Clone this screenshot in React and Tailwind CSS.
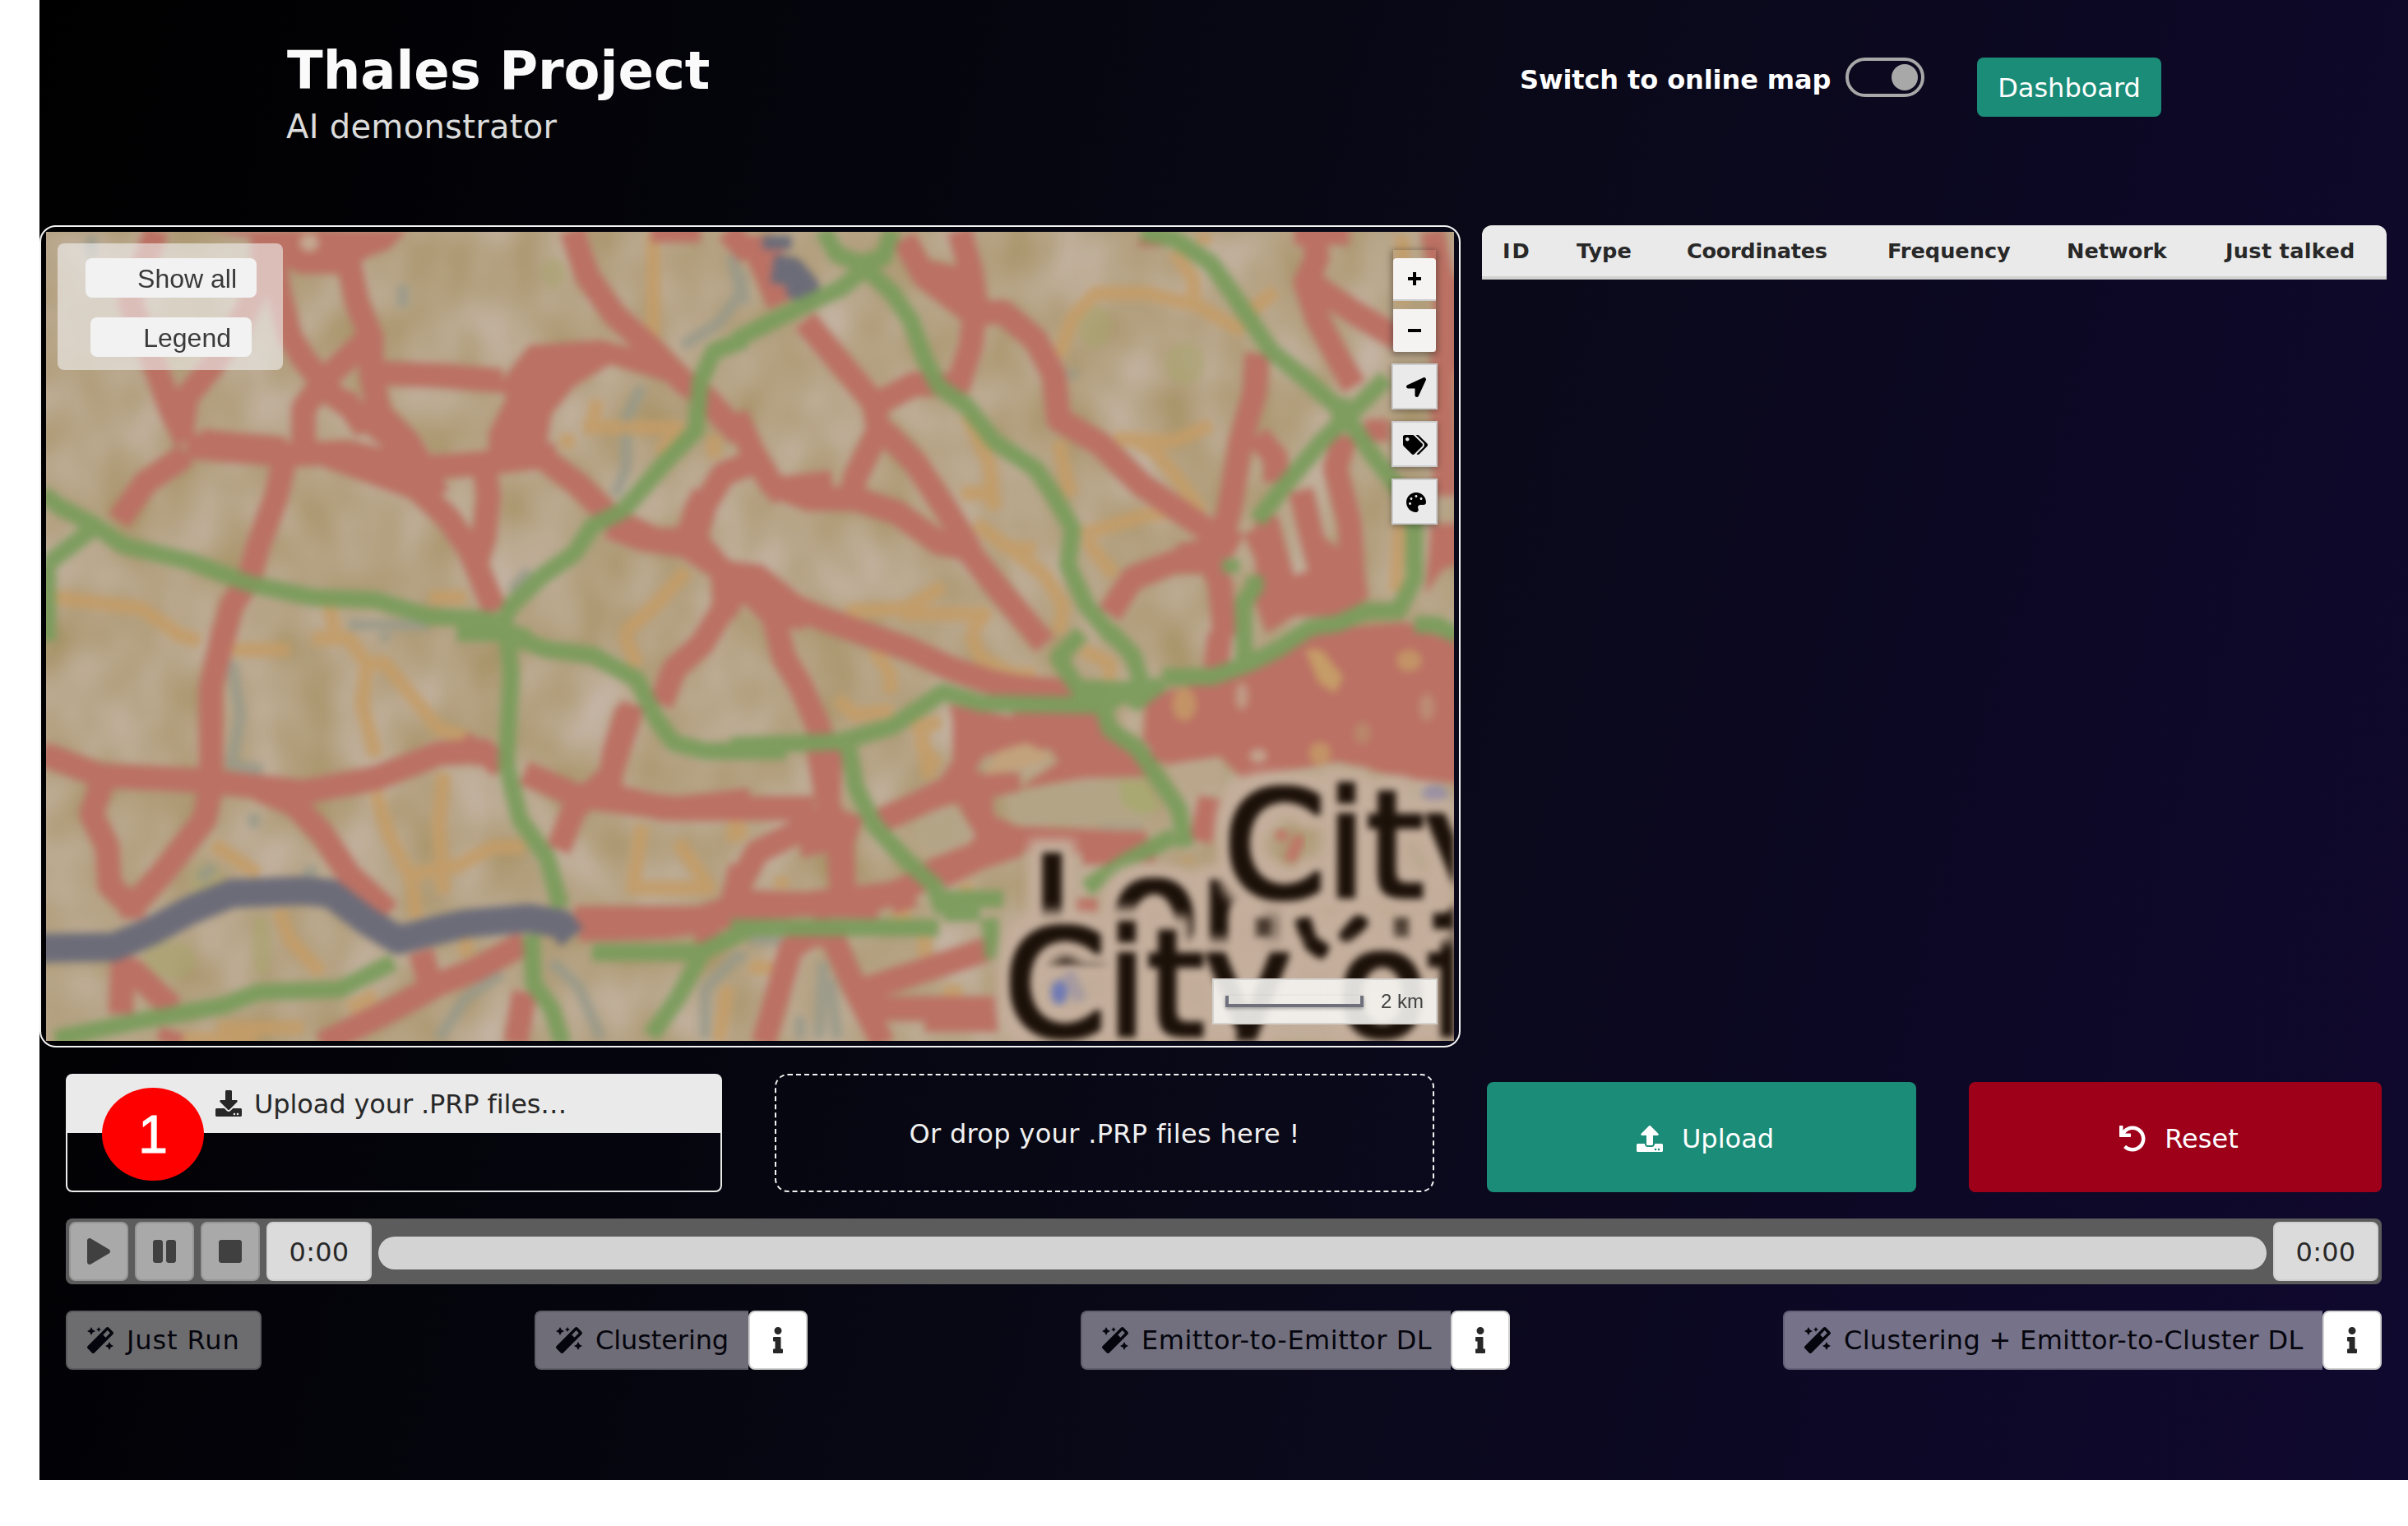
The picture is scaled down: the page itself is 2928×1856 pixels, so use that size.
import React from "react";
import {
  FaDownload, FaInfo, FaLocationArrow, FaMagic, FaPalette, FaPause, FaPlay,
  FaStop, FaTags, FaUndo, FaUpload,
} from "react-icons/fa";

const RED = "#bb7164";
const GREEN = "#7a9c5c";
const ORANGE = "#c59c67";
const TEAL = "#96998a";
const SLATE = "#6c6c79";

// The map is drawn as four quadrants plus two dense districts, each with its own drawing grid.
const QUADS = {
  nw: "matrix(0.54847 0 0 0.33333 -16 -12)",
  ne: "matrix(0.56122 0 0 0.33333 844 -12)",
  sw: "matrix(0.54847 0 0 0.33333 -16 488)",
  se: "matrix(0.56122 0 0 0.33333 844 488)",
  mid: "matrix(0.33333 0 0 0.33333 684 318)",
  east: "matrix(0.33333 0 0 0.33333 1284 318)",
};

const LAYERS = [
  {
    color: TEAL, width: 14, opacity: 0.8,
    roads: {
      nw: "M1550 120L1568 260L1520 370L1440 450M1350 600L1315 720V900L1290 1000M700 1470H880M130 50V130M820 230V310M1100 1270L1060 1350",
      ne: "M0 180L10 300M720 540V570",
      sw: "M440 100L460 300L440 480L510 500M490 660V710M1150 1200L1210 1290L1260 1480M1040 1240L960 1330L900 1480M1560 1180L1490 1300V1480M600 870H630M780 0V30M370 900L400 850",
      se: "M20 1120H90M0 1160V1200M180 1200L170 1480M195 1260L210 1480M130 1400V1480M780 690H870",
    },
  },
  {
    color: ORANGE, width: 17, opacity: 0.85,
    roads: {
      nw: "M1375 40V430M1220 750H1430L1390 850M1250 650L1240 750M1510 780V860M1170 800H1200M50 1370L240 1410L320 1500M650 1350L670 1500M880 1370H960M1450 1270L1380 1400L1310 1500M1400 770L1440 790",
      ne: "M1005 40V80M940 110L980 200L985 300L1090 400M980 300L880 260H770L720 350L690 490M1160 250L1110 320M810 790L940 800L1020 740M850 790L900 840L950 940L1000 1060M900 800L910 870M490 700L540 880L550 1050M480 990H550M690 800L715 1000M510 1100L600 1210L660 1290L700 1400L690 1500M580 1190H640M740 1140L880 1070L950 1060M750 1160L810 1290M230 1420L360 1410L440 1330M350 1430H530L500 1500M1435 50V300M1430 1100L1420 1350M1540 480V600",
      sw: "M310 0L370 30M440 60H570M620 20L700 20L740 110L730 260L760 450M750 110H780L830 210L900 350L960 380M910 510L900 700L910 950M760 580L790 740L840 900L850 1040M1090 780H1020L940 850L840 880M400 770L500 880M545 1010L570 1120L640 1240M1350 700L1330 930H1500L1430 760M960 1110V1180M700 1370L760 1320M1540 1290L1520 1490M1310 0L1340 120M330 1480H500M410 1440H600M1560 680L1550 760",
      se: "M290 60L325 150V220M210 240L250 300L330 280M390 310L400 440L410 530M500 0L520 90L590 150H640M740 60L800 110V170M0 700V750M90 890V930M20 1220H70M400 1100V1180M370 1020H330M970 820V840M440 1310H480M490 910V940",
      mid: "M1110 870L1210 830M1130 900L1200 1000",
    },
  },
  {
    color: RED, width: 30, opacity: 1,
    roads: {
      nw: "M275 30L240 180L215 290L245 420L275 540L305 680L340 800M510 60V200L480 300L450 400L390 540L340 640L330 760M530 100L545 250L570 420L600 500L640 580M700 150L720 300L750 420V560L770 700L830 800L860 880M740 430L650 570L600 680V820M640 600L740 720L820 820M690 640L740 760M740 550L900 560L1040 580M1195 30L1230 200L1290 340L1370 460L1440 580L1490 640L1568 780M340 820L560 850L700 840L850 900L1000 880L1160 850M340 850L250 950L190 1090M560 850L540 1000L500 1180L480 1300L440 1400L420 1530M650 850L850 970L920 1080L970 1200L1025 1420M1000 870L1010 1000L1000 1150L980 1260M860 900L900 1000M1130 860L1210 960L1290 1090L1380 1160H1470L1530 1280M1470 1150L1490 1030L1530 920L1590 880M1540 30L1590 120M370 800L560 830M1370 30H1480",
      ne: "M-10 700L30 850L70 960L150 1010L250 1010L340 1060L430 1170L490 1190L560 1340L660 1540M60 980L200 950M140 360L220 520L290 660L300 760L250 930L240 1000M300 660L380 590L490 600M310 760L380 880L450 1060L500 1200M475 30L500 180L510 300L500 450L470 610M355 60L400 200L500 330L570 330L640 430L680 560L690 720L780 810L870 960L1000 1110L1080 1180M400 180L500 220M-10 1290L40 1320M30 50V90L55 180L85 300M80 60L60 120M1240 30L1250 130L1225 220L1250 350L1290 480L1330 600M1200 40H1320M1230 200L1260 250L1330 330L1430 430M1120 480L1115 620L1085 800L1060 1050L1040 1180M1120 780L1160 860V950M1500 30L1530 300L1520 600L1530 1000M1310 780L1290 900L1320 1100L1330 1380M1215 980L1240 1160L1270 1340M1115 1120L1150 1250L1200 1420M800 1430L850 1300L940 1240H1020L1040 1320L1050 1510M950 1220L1060 1180M1380 720V800M1550 200V540M890 60V90",
      sw: "M425 -20L395 200L395 560M20 440L150 520L390 540L600 580L760 530L900 440L1000 430L1040 490M1090 510L1200 590L1280 610L1430 640L1590 610M1330 260L1280 520L1200 640L1165 790M155 540L130 660L165 780L170 920L220 1000L290 870L380 680L395 560M220 960V1040M560 590L640 730L700 880L790 1020M200 1180L195 1390M215 1220L310 1370M300 1500L310 1450M640 1500L800 1370L900 1280L980 1230L1090 1130M860 1160L880 1280M1070 1500L1090 1310M1200 1040H1480L1600 970M1210 1080L1400 1070L1590 1020M1500 1130L1490 1060M1570 850L1550 1000M500 570L600 640M950 400L1000 450",
      se: "M170 420L190 620L215 800L220 950M490 550L530 700L600 750L880 770M570 770L430 860L340 950L-20 1020M0 980L300 1000M200 1050L110 1150L50 1500M200 1110L250 1300L310 1500M560 1140L400 1230L270 1300M280 1370H560M400 1410H560M1040 0L1030 130M1020 600L1000 760M100 1100H230M740 800H900M750 970V1030M350 960L360 1010",
      mid: "M0 120L120 165L280 190L400 270L500 330L650 400L760 450L900 500L1100 570L1250 640L1400 690L1500 710L1700 725M280 190L320 60L350 0M420 420L340 550L240 640L190 770M600 440L640 600L700 700L760 840L780 900M810 930L800 1140L850 1240L860 1500M70 790L20 950L0 1100L200 1150H750M800 1180L540 1310L450 1480M700 1230L900 1230M1000 1190L1250 1080M1210 1400L1350 1330L1500 1280M1100 1440L900 1500M1300 800V1060L1370 1200L1400 1300",
    },
  },
  {
    color: SLATE, width: 35, opacity: 1,
    roads: {
      ne: "M70 170L110 180L140 240L125 290M80 50V100",
      sw: "M10 1150L180 1145L260 1090L350 1010L440 950L600 940L660 950L740 1050L810 1120L880 1090L960 1060L1100 1040L1170 1060L1195 1110",
    },
  },
  {
    color: GREEN, width: 21, opacity: 0.93,
    roads: {
      nw: "M20 990L60 1040L130 1100L200 1180L350 1240L480 1320L620 1370L760 1380L880 1440L1010 1450L1060 1500L1100 1520M30 1250L140 1110M32 1250V1530M1580 430L1510 470L1480 580L1470 760L1400 880L1310 1050L1240 1110L1200 1210L1130 1290L1060 1400L1030 1500",
      ne: "M180 30L210 120L260 150L310 130L330 30M265 120V200M260 150L330 260L370 360L400 500L430 600L490 670L550 800L640 900L680 1000L720 1120L710 1250L750 1400L810 1520M270 170L220 240L130 310L60 370L-10 430M870 40L940 60L1020 150L1070 270L1110 370L1150 470L1230 580L1310 700L1370 850L1440 1000L1460 1100V1280M1400 570L1310 720L1260 800L1180 960L1120 1090M1300 640V760",
      sw: "M1050 -20L1060 150L1055 300L1050 480L1080 680L1140 820L1170 1000M1040 0L1140 60L1240 80L1340 170L1380 310L1420 400L1490 430H1590M940 0H1060M50 1480L220 1420L420 1360L500 1310L680 1300L800 1200M1105 1100L1110 1280L1150 1370L1175 1500M1240 1165H1480L1590 1080M1480 1180L1430 1330L1370 1470",
      se: "M-20 410L220 395L330 340L440 215L520 255L790 265L870 180L850 80L800 -10M0 430H100M740 0L690 90L730 200M785 260L800 350L860 420L910 540L950 640L965 780M235 420L250 560L290 700L360 830L420 920L440 1020M540 1040L550 1190M-20 1075H430M440 970H570M440 1020H520M940 740L840 830L750 930M720 200L860 210",
      east: "M220 670H400L540 620L640 570L760 490L860 475L960 430H1080L1140 310L1140 110M520 620L515 400L560 340L555 300M470 240V290M1140 480H1220L1300 520M100 780L220 690",
    },
  },
];

const LIGHT_SPOTS = [
  ["#c0ae97", 110, 830, 34, 44], ["#c59c67", 300, 770, 44, 60], ["#c0a58c", 510, 740, 24, 50],
  ["#c4b098", 570, 958, 32, 26], ["#c59c67", 795, 950, 40, 42], ["#b98d6c", 950, 875, 30, 40],
  ["#c59c67", 1120, 610, 46, 40], ["#bd9478", 1185, 780, 28, 50], ["#8d87a8", 1215, 1100, 48, 36],
];

function MapCanvas() {
  return (
    <svg className="block h-full w-full" viewBox="0 0 1712 984" preserveAspectRatio="none">
      <defs>
        <filter id="soft" x="-2%" y="-2%" width="104%" height="104%" colorInterpolationFilters="sRGB">
          <feGaussianBlur stdDeviation="4.6" />
        </filter>
        <filter id="label" filterUnits="userSpaceOnUse" x="0" y="0" width="1712" height="984" colorInterpolationFilters="sRGB">
          <feMorphology in="SourceAlpha" operator="dilate" radius="19" result="wide" />
          <feGaussianBlur in="wide" stdDeviation="7" result="wideSoft" />
          <feFlood floodColor="#c4ae9c" />
          <feComposite in2="wideSoft" operator="in" result="halo" />
          <feMorphology in="SourceGraphic" operator="dilate" radius="3" result="bold" />
          <feGaussianBlur in="bold" stdDeviation="4.5" result="ink" />
          <feMerge>
            <feMergeNode in="halo" />
            <feMergeNode in="ink" />
          </feMerge>
        </filter>
        <filter id="mottle" x="0" y="0" width="100%" height="100%" colorInterpolationFilters="sRGB">
          <feTurbulence type="fractalNoise" baseFrequency="0.014 0.011" numOctaves="2" seed="8" />
          <feColorMatrix values="0.14 0 0 0 0.645  0.16 0 0 0 0.562  0.3 0 0 0 0.375  0 0 0 0 1" />
        </filter>
      </defs>
      <rect width="1712" height="984" filter="url(#mottle)" />
      <g filter="url(#soft)">
        <g fill="#a9a36f" opacity="0.6">
          <ellipse cx="150" cy="885" rx="32" ry="24" />
          <ellipse cx="262" cy="868" rx="12" ry="38" />
          <ellipse cx="617" cy="50" rx="14" ry="18" />
          <ellipse cx="195" cy="790" rx="20" ry="24" />
          <ellipse cx="1275" cy="115" rx="20" ry="26" />
          <ellipse cx="1385" cy="160" rx="24" ry="26" />
        </g>
        <g fill={RED}>
          <path transform={QUADS.nw} d="M380 30H830L790 100L740 130L700 190H590L530 130L490 60Z" />
          <path transform={QUADS.nw} d="M1030 600L1100 450L1260 430L1400 490L1480 570L1420 590L1280 520L1200 600L1150 700L1140 800L1180 880H1010L1010 770L1050 640Z" />
          <path transform={QUADS.nw} d="M800 850L900 870L880 960L800 950Z" />
          <path transform={QUADS.mid} d="M370 240L560 260L710 380L780 440L700 500L560 470L490 400L460 460L380 440Z" />
          <path transform={QUADS.mid} d="M1240 770L1500 820V930L1370 960L1330 1020L1500 1020V1090L1400 1110L1410 1220L1500 1240V1290L1200 1410L1340 1250L1270 1130L1010 1210L970 1160L1210 1040L1290 920Z" />
          <path transform={QUADS.mid} d="M700 1200L780 1140L930 1180L900 1270L860 1300L700 1330Z" />
          <path transform={QUADS.east} d="M560 100L640 80L700 300L760 280L800 150L860 200L920 0L970 380L880 450L700 450L600 510L560 400Z" />
          <path transform={QUADS.east} d="M1200 110H1310V250L1240 280L1180 370Z" />
          <path transform={QUADS.east} d="M160 740L540 650L760 500L1110 470L1220 520H1310V1060L1080 1040L860 980L520 1050L430 960L230 990L150 900Z" />
          <path transform={QUADS.se} d="M590 290L760 270L850 420L920 440L890 520L740 530L600 570L690 470L670 420L590 450Z" />
        </g>
        <ellipse cx="320" cy="13" rx="12" ry="11" fill="#c4a78f" />
        {LAYERS.map((layer, i) => (
          <g key={i} fill="none" stroke={layer.color} opacity={layer.opacity} strokeLinejoin="round" strokeWidth={layer.width}>
            {Object.entries(layer.roads).map(([q, d]) => (
              <path key={q} d={d} transform={QUADS[q]} vectorEffect="non-scaling-stroke" />
            ))}
          </g>
        ))}
        <g transform={QUADS.east}>
          {LIGHT_SPOTS.map(([fill, cx, cy, rx, ry], i) => (
            <ellipse key={i} cx={cx} cy={cy} rx={rx} ry={ry} fill={fill} opacity="0.8" />
          ))}
          <path d="M740 570H800L880 670L850 730L790 690Z" fill={ORANGE} />
          <path d="M240 1000L430 960L440 1040L330 1120Z" fill="#b9a68b" />
        </g>
        <g transform={QUADS.se}>
          <path d="M530 520L560 430L620 400L680 450L640 480Z" fill="#c2a27c" />
          <path d="M570 590L740 540L870 530L910 640L870 700L590 700Z" fill="#b3a486" />
          <path d="M820 540H880L910 640L870 660L830 630Z" fill="#a9a872" />
          <path d="M380 690L460 640L500 740L430 800L380 760Z" fill="#b3a486" />
        </g>
        <path d="M1420 830H1712V984H1180V900Z" fill="#c1ad99" />
      </g>
      <g fontFamily="DejaVu Sans, sans-serif" fontSize="178" fill="#1c1109">
        <text x="1197" y="888" filter="url(#label)">Lon</text>
        <g filter="url(#label)" fill="none" stroke="#1c1109" strokeWidth="12">
          <path d="M1528 836L1536 864L1554 876M1600 836L1580 860" />
          <path d="M1480 836V856M1648 836V858" opacity="0.7" />
        </g>
        <text x="1165" y="977" filter="url(#label)">City of</text>
        <text x="1432" y="808" filter="url(#label)">City</text>
      </g>
      <g filter="url(#soft)" fill="none">
        <path d="M1525 735L1512 765M1505 728L1500 740" stroke="#bf7567" strokeWidth="14" />
        <ellipse cx="1232" cy="925" rx="10" ry="15" fill="#6f7ab4" />
        <path d="M1242 900L1258 935" stroke="#a69aa0" strokeWidth="16" />
      </g>
    </svg>
  );
}

function MapButton({ children }) {
  return (
    <button className="flex h-14 w-14 items-center justify-center border-2 border-[#cbcbcb] bg-[#eaeaea] pt-0.5 text-black shadow-[0_2px_8px_rgba(0,0,0,0.35)]">
      {children}
    </button>
  );
}

function MapPanel() {
  return (
    <section className="relative h-[1000px] w-[1728px] shrink-0 rounded-[20px] border-2 border-[#f2f2f2] p-1.5">
      <MapCanvas />
      <div className="absolute top-[20px] left-[20px] flex h-[154px] w-[274px] flex-col items-center gap-6 rounded-lg bg-[#f2f2f2]/60 pt-[18px] pl-0.5 font-['Liberation_Sans',sans-serif] text-[32px] leading-[50px] text-[#3a3a3a]">
        <button className="h-12 w-[208px] rounded-lg bg-[#f2f2f2] pr-6 text-right">Show all</button>
        <button className="h-12 w-[196px] rounded-lg bg-[#f2f2f2] pr-[25px] text-right">Legend</button>
      </div>
      <div className="absolute top-[28px] right-[26px] flex flex-col items-center">
        <div className="mb-3.5 flex h-[124px] w-[52px] flex-col gap-2.5 pt-2.5 shadow-[0_2px_8px_2px_rgba(0,0,0,0.35)]">
          <button className="flex h-[52px] items-center justify-center rounded-t border-b-2 border-[#ccc] bg-[#f6f4f2]">
            <svg width="16" height="16" viewBox="0 0 16 16"><path d="M8 0V16M0 8H16" stroke="#000" strokeWidth="4" /></svg>
          </button>
          <button className="flex h-[52px] items-center justify-center rounded-b bg-[#f4f3f1]">
            <svg width="16" height="16" viewBox="0 0 16 16"><path d="M0 8H16" stroke="#000" strokeWidth="4" /></svg>
          </button>
        </div>
        <div className="flex flex-col gap-3.5">
          <MapButton><FaLocationArrow className="ml-1 h-6 w-6" /></MapButton>
          <MapButton><FaTags className="ml-0.5 h-6 w-[30px]" /></MapButton>
          <MapButton><FaPalette className="ml-1 h-6 w-6" /></MapButton>
        </div>
      </div>
      <div className="absolute right-[26px] bottom-[26px] flex h-14 w-[274px] items-center border-2 border-[#d4d2cf] bg-[#f5f4f1]/90 pl-3.5 font-['Liberation_Sans',sans-serif] text-2xl text-[#444]">
        <div className="mr-[21px] h-3.5 w-[168px] border-4 border-t-0 border-[#6f707c] shadow-[0_2px_4px_rgba(0,0,0,0.3)]" />
        2 km
      </div>
    </section>
  );
}

function Header() {
  return (
    <header className="flex h-[274px] items-start pt-[48px] pl-[301px] whitespace-nowrap">
      <div className="w-[1499px]">
        <h1 className="text-[64px] leading-[77px] font-bold text-[#fafafa]">Thales Project</h1>
        <p className="-ml-px text-[40px] leading-[59px] tracking-[0.3px] text-[#dcdcdc]">AI demonstrator</p>
      </div>
      <div className="mt-[22px] flex items-start">
        <span className="w-[396px] text-[32px] leading-[54px] font-bold tracking-[-0.1px] text-white">Switch to online map</span>
        <div className="flex h-12 w-24 items-center justify-end rounded-full border-4 border-[#a8a8a8] pr-1">
          <div className="h-8 w-8 rounded-full bg-[#a8a8a8]" />
        </div>
        <button className="ml-16 h-[72px] w-[224px] rounded-lg bg-[#1a8c77] pt-0.5 text-[32px] text-white">Dashboard</button>
      </div>
    </header>
  );
}

function TableHead() {
  return (
    <div className="ml-[26px] grid h-[66px] w-[1100px] grid-cols-[90px_134px_244px_218px_193px_1fr] items-center rounded-t-xl border-b-4 border-[#d2d2d0] bg-[#eaeaea] pl-[25px] text-[25.6px] font-bold whitespace-nowrap text-[#282828]">
      <span className="tracking-[2px]">ID</span>
      <span>Type</span>
      <span className="tracking-[-0.3px]">Coordinates</span>
      <span>Frequency</span>
      <span>Network</span>
      <span className="tracking-[0.3px]">Just talked</span>
    </div>
  );
}

function UploadRow() {
  return (
    <div className="flex h-36 w-[2816px] items-end text-[32px] whitespace-nowrap">
      <div className="relative h-36 w-[798px] rounded-lg border-2 border-[#eaeaea]">
        <div className="flex h-[70px] items-center gap-[15px] bg-[#eaeaea] pl-[180px] text-[#282828]">
          <FaDownload className="mb-0.5 h-8 w-8" />
          <span className="tracking-[-0.12px]">Upload your .PRP files…</span>
        </div>
        <div className="absolute top-[15px] left-[42px] flex h-[113px] w-[124px] items-center justify-center rounded-[50%] bg-[#ff0000] font-['Liberation_Sans',sans-serif] text-[64px] text-white [-webkit-text-stroke:1.2px_white]">1</div>
      </div>
      <div className="ml-16 flex h-36 w-[802px] items-center justify-center rounded-2xl border-2 border-dashed border-[#f2f2f2] pt-0.5 tracking-[0.33px] text-[#f0f0f0]">
        Or drop your .PRP files here !
      </div>
      <button className="ml-16 flex h-[134px] w-[522px] items-center justify-center gap-[23px] rounded-lg bg-[#1b8c77] pt-[3px] pl-[9px] text-white">
        <FaUpload className="h-8 w-8" />
        <span>Upload</span>
      </button>
      <button className="ml-16 flex h-[134px] w-[502px] items-center justify-center gap-[23px] rounded-lg bg-[#9e0019] pt-[3px] pl-[9px] text-white">
        <FaUndo className="h-8 w-8" />
        <span>Reset</span>
      </button>
    </div>
  );
}

function Player() {
  const key = "flex h-[72px] w-[72px] items-center justify-center rounded-lg border-2 border-[#969696] bg-[#a9a9a9] text-[#404040]";
  const time = "flex h-[72px] w-32 items-center justify-center rounded-lg border-2 border-[#d0d0d0] bg-[#dbdbdb] pt-px text-[32px] tracking-[0.3px] text-[#282828]";
  return (
    <div className="mt-8 flex h-20 w-[2816px] items-center gap-2 rounded-lg bg-[#5c5c5c] px-1">
      <button className={key}><FaPlay className="h-8 w-7" /></button>
      <button className={key}><FaPause className="h-8 w-7" /></button>
      <button className={key}><FaStop className="h-8 w-7" /></button>
      <span className={time}>0:00</span>
      <div className="mt-1 h-10 flex-1 rounded-full bg-[#d3d3d3]" />
      <span className={time}>0:00</span>
    </div>
  );
}

function RunButton({ label, width, info, tone, tracking }) {
  return (
    <div className="flex">
      <button className={`flex h-[72px] items-center gap-4 border-2 pl-6 text-[32px] whitespace-nowrap text-[#05050d] ${width} ${tone} ${info ? "rounded-l-lg border-r-0" : "rounded-lg"}`}>
        <FaMagic className="h-8 w-8 shrink-0" />
        <span className={tracking}>{label}</span>
      </button>
      {info && (
        <button className="flex h-[72px] w-[72px] items-center justify-center rounded-lg border-2 border-[#d0d0d0] bg-white text-[#282828]">
          <FaInfo className="h-8 w-3" />
        </button>
      )}
    </div>
  );
}

export default function App() {
  return (
    <div className="h-[1856px] w-[2928px] overflow-hidden bg-white pl-12 font-['DejaVu_Sans',sans-serif]">
      <main className="h-[1800px] w-[2880px] bg-[linear-gradient(105deg,#000000_0%,#04040b_26%,#0a0919_56%,#0d0826_80%,#10092f_100%)]">
        <Header />
        <div className="flex items-start">
          <MapPanel />
          <TableHead />
        </div>
        <div className="pt-8 pl-8">
          <UploadRow />
          <Player />
          <div className="mt-8 flex w-[2816px] justify-between">
            <RunButton label="Just Run" width="w-[238px]" tracking="tracking-[0.9px]" tone="border-[#5b5b5f] bg-[#6d6d70]" />
            <RunButton label="Clustering" width="w-[260px]" tracking="tracking-[-0.1px]" tone="border-[#5f5d68] bg-[#6f6d78]" info />
            <RunButton label="Emittor-to-Emittor DL" width="w-[450px]" tracking="tracking-[0.5px]" tone="border-[#605e6d] bg-[#72707f]" info />
            <RunButton label="Clustering + Emittor-to-Cluster DL" width="w-[656px]" tracking="tracking-[0.3px]" tone="border-[#646078] bg-[#767289]" info />
          </div>
        </div>
      </main>
    </div>
  );
}
